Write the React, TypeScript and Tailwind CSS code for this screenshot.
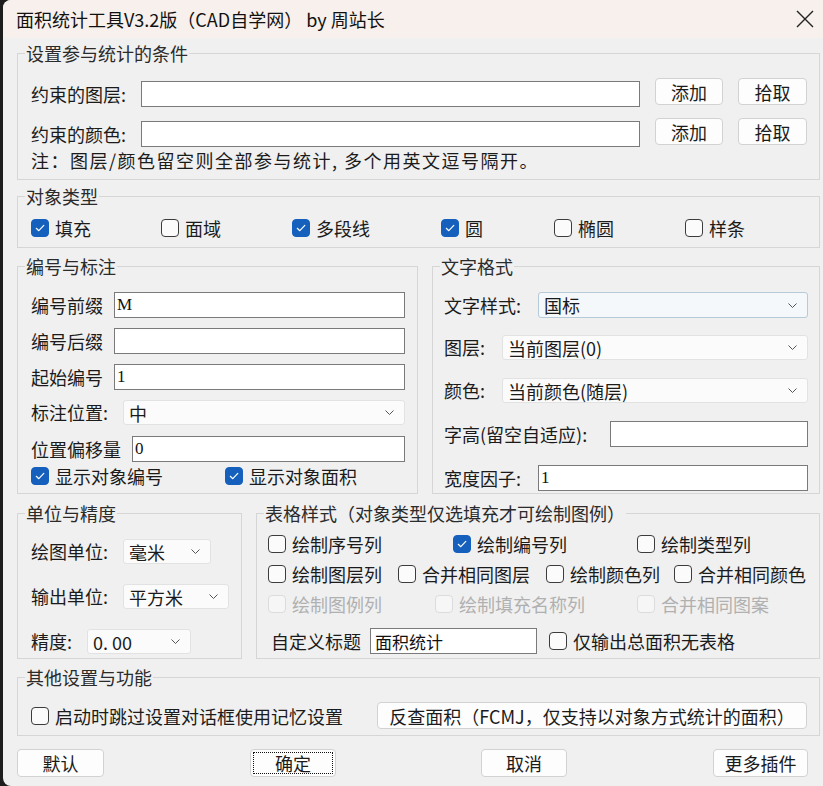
import React from 'react';
import clsx from 'clsx';

const Check = ({ checked, disabled }: { checked?: boolean; disabled?: boolean }) => (
  <span
    className={clsx(
      'flex h-[18px] w-[18px] flex-none items-center justify-center rounded-[4px] border',
      checked
        ? 'border-[#1560bd] bg-[#1560bd]'
        : disabled
          ? 'border-[#dcdcdc] bg-[#f6f6f6]'
          : 'border-[#3c3c3c] bg-[#fbfbfb]'
    )}
  >
    {checked && (
      <svg width="12" height="12" viewBox="0 0 12 12" fill="none">
        <path d="M2.3 6.3 4.8 8.7 9.8 3.4" stroke="white" strokeWidth="1.2" strokeLinecap="round" strokeLinejoin="round" />
      </svg>
    )}
  </span>
);

const CheckItem = ({
  label,
  checked,
  disabled,
  className,
}: {
  label: string;
  checked?: boolean;
  disabled?: boolean;
  className?: string;
}) => (
  <label className={clsx('flex h-[18px] flex-none items-center gap-[6px]', className)}>
    <Check checked={checked} disabled={disabled} />
    <span className={clsx('whitespace-nowrap leading-[18px]', disabled && 'text-[#b0b0b0]')}>{label}</span>
  </label>
);

const Field = ({ value, className }: { value?: string; className?: string }) => (
  <input
    readOnly
    defaultValue={value}
    className={clsx(
      'h-[26px] min-w-0 border border-[#7a7a7a] bg-white px-[2px] font-["Liberation_Serif",serif] text-[17px] text-[#111] outline-none',
      className
    )}
  />
);

const Select = ({ value, className, focus }: { value: string; className?: string; focus?: boolean }) => (
  <div
    className={clsx(
      'flex h-[25px] items-center justify-between rounded-[3px] border pl-[5px] pr-[10px] text-[18px] leading-none',
      focus ? 'border-[#b7cad8] bg-[#f4f8fb]' : 'border-[#e2e2e2] bg-[#fbfbfb]',
      className
    )}
  >
    <span className="whitespace-nowrap">{value}</span>
    <svg width="9" height="5" viewBox="0 0 9 5" fill="none">
      <path d="M0.5 0.5 4.5 4.5 8.5 0.5" stroke="#555" strokeWidth="1" />
    </svg>
  </div>
);

const Btn = ({ label, className }: { label: string; className?: string }) => (
  <button className={clsx('flex items-center justify-center rounded-[4px] border border-[#d2d2d2] bg-[#fdfdfd] text-[18px] leading-none text-[#1b1b1b]', className)}>
    {label}
  </button>
);

// frame with caption on the border; padding goes on the inner box so the caption stays put
const Group = ({
  title,
  className,
  bodyClass,
  children,
}: {
  title: string;
  className?: string;
  bodyClass?: string;
  children: React.ReactNode;
}) => (
  <fieldset className={clsx('flex flex-col border border-[#d6d6d6]', className)}>
    <legend className="ml-[7px] px-[1px] text-[18px] leading-[24px] text-[#2b2b2b]">{title}</legend>
    <div className={clsx('flex-1', bodyClass)}>{children}</div>
  </fieldset>
);

export default function App() {
  return (
    <div className="flex h-[786px] w-[823px] overflow-hidden bg-[#1d1d1d] font-['Noto_Sans_CJK_SC',sans-serif] text-[18px] text-[#1b1b1b]">
      <div className="ml-[3px] flex flex-1 flex-col overflow-hidden rounded-l-[8px] bg-[#f0f0f0]">
        {/* title bar */}
        <div className="flex h-[38px] flex-none items-center justify-between bg-[#f7f0ec] pl-[13px] pr-[9px]">
          <span className="text-[18px] leading-none text-[#111]">面积统计工具V3.2版（CAD自学网） by 周站长</span>
          <svg width="18" height="18" viewBox="0 0 18 18" fill="none">
            <path d="M1 1 17 17M17 1 1 17" stroke="#222" strokeWidth="1.4" />
          </svg>
        </div>

        <div className="flex flex-1 flex-col pl-[14px] pr-[3px]">
          {/* 设置参与统计的条件 */}
          <Group title="设置参与统计的条件" className="mt-[3px]" bodyClass="pb-[8px] pl-[13px] pr-[12px] pt-[13px]">
            <div className="flex h-[29px] items-start">
              <span className="w-[110px] flex-none pt-[3px] leading-[26px]">约束的图层:</span>
              <Field className="mt-[3px] flex-1" />
              <Btn label="添加" className="ml-[15px] h-[27px] w-[68px]" />
              <Btn label="拾取" className="ml-[15px] h-[27px] w-[69px]" />
            </div>
            <div className="mt-[11px] flex h-[29px] items-start">
              <span className="w-[110px] flex-none pt-[3px] leading-[26px]">约束的颜色:</span>
              <Field className="mt-[3px] flex-1" />
              <Btn label="添加" className="ml-[15px] h-[27px] w-[68px]" />
              <Btn label="拾取" className="ml-[15px] h-[27px] w-[69px]" />
            </div>
            <div className="mt-[2px] h-[22px] leading-[22px] tracking-[1.5px]">注：图层/颜色留空则全部参与统计, 多个用英文逗号隔开。</div>
          </Group>

          {/* 对象类型 */}
          <Group title="对象类型" className="mt-[4px]" bodyClass="pb-[9px] pl-[13px] pt-[10px]">
            <div className="flex h-[20px] items-center">
              <CheckItem label="填充" checked className="w-[130px]" />
              <CheckItem label="面域" className="w-[131px]" />
              <CheckItem label="多段线" checked className="w-[149px]" />
              <CheckItem label="圆" checked className="w-[113px]" />
              <CheckItem label="椭圆" className="w-[131px]" />
              <CheckItem label="样条" />
            </div>
          </Group>

          <div className="mt-[6px] flex gap-[14px]">
            {/* 编号与标注 */}
            <Group title="编号与标注" className="w-[401px] flex-none" bodyClass="pb-[8px] pl-[13px] pr-[12px] pt-[14px]">
              <div className="flex flex-col gap-[10px]">
                <div className="flex h-[26px] items-center">
                  <span className="w-[83px] flex-none">编号前缀</span>
                  <Field value="M" className="flex-1" />
                </div>
                <div className="flex h-[26px] items-center">
                  <span className="w-[83px] flex-none">编号后缀</span>
                  <Field className="flex-1" />
                </div>
                <div className="flex h-[26px] items-center">
                  <span className="w-[83px] flex-none">起始编号</span>
                  <Field value="1" className="flex-1" />
                </div>
                <div className="flex h-[26px] items-start">
                  <span className="w-[92px] flex-none leading-[24px]">标注位置:</span>
                  <Select value="中" className="flex-1" />
                </div>
                <div className="flex h-[26px] items-center">
                  <span className="w-[101px] flex-none">位置偏移量</span>
                  <Field value="0" className="flex-1" />
                </div>
              </div>
              <div className="mt-[5px] flex h-[18px] items-center">
                <CheckItem label="显示对象编号" checked className="w-[194px]" />
                <CheckItem label="显示对象面积" checked />
              </div>
            </Group>

            {/* 文字格式 */}
            <Group title="文字格式" className="min-w-0 flex-1" bodyClass="pb-[2px] pl-[11px] pr-[11px] pt-[14px]">
              <div className="flex h-[26px] items-center">
                <span className="w-[94px] flex-none">文字样式:</span>
                <Select value="国标" focus className="h-[26px] flex-1" />
              </div>
              <div className="mt-[17px] flex h-[25px] items-center">
                <span className="w-[58px] flex-none">图层:</span>
                <Select value="当前图层(0)" className="flex-1" />
              </div>
              <div className="mt-[18px] flex h-[25px] items-center">
                <span className="w-[58px] flex-none">颜色:</span>
                <Select value="当前颜色(随层)" className="flex-1" />
              </div>
              <div className="mt-[18px] flex h-[26px] items-center">
                <span className="w-[166px] flex-none">字高(留空自适应):</span>
                <Field className="flex-1" />
              </div>
              <div className="mt-[18px] flex h-[26px] items-center">
                <span className="w-[94px] flex-none">宽度因子:</span>
                <Field value="1" className="flex-1" />
              </div>
            </Group>
          </div>

          <div className="mt-[7px] flex gap-[14px]">
            {/* 单位与精度 */}
            <Group title="单位与精度" className="w-[225px] flex-none" bodyClass="pb-[4px] pl-[13px] pt-[14px]">
              <div className="flex h-[25px] items-center">
                <span className="w-[92px] flex-none">绘图单位:</span>
                <Select value="毫米" className="w-[88px]" />
              </div>
              <div className="mt-[20px] flex h-[25px] items-center">
                <span className="w-[92px] flex-none">输出单位:</span>
                <Select value="平方米" className="w-[106px]" />
              </div>
              <div className="mt-[20px] flex h-[25px] items-center">
                <span className="w-[56px] flex-none">精度:</span>
                <Select value="0. 00" className="w-[104px]" />
              </div>
            </Group>

            {/* 表格样式 */}
            <Group title="表格样式（对象类型仅选填充才可绘制图例）" className="min-w-0 flex-1" bodyClass="pb-[4px] pl-[11px] pt-[10px]">
              <div className="flex h-[18px] items-center">
                <CheckItem label="绘制序号列" className="w-[185px]" />
                <CheckItem label="绘制编号列" checked className="w-[184px]" />
                <CheckItem label="绘制类型列" />
              </div>
              <div className="mt-[12px] flex h-[18px] items-center">
                <CheckItem label="绘制图层列" className="w-[130px]" />
                <CheckItem label="合并相同图层" className="w-[148px]" />
                <CheckItem label="绘制颜色列" className="w-[128px]" />
                <CheckItem label="合并相同颜色" />
              </div>
              <div className="mt-[12px] flex h-[18px] items-center">
                <CheckItem label="绘制图例列" disabled className="w-[167px]" />
                <CheckItem label="绘制填充名称列" disabled className="w-[202px]" />
                <CheckItem label="合并相同图案" disabled />
              </div>
              <div className="mt-[15px] flex h-[26px] items-center">
                <span className="ml-[3px] w-[99px] flex-none">自定义标题</span>
                <Field value="面积统计" className="w-[167px] flex-none px-[4px] font-['Noto_Sans_CJK_SC',sans-serif]" />
                <CheckItem label="仅输出总面积无表格" className="ml-[12px]" />
              </div>
            </Group>
          </div>

          {/* 其他设置与功能 */}
          <Group title="其他设置与功能" className="mt-[6px]" bodyClass="pb-[6px] pl-[13px] pr-[12px] pt-[13px]">
            <div className="flex h-[27px] items-center">
              <CheckItem label="启动时跳过设置对话框使用记忆设置" />
              <Btn label="反查面积（FCMJ，仅支持以对象方式统计的面积）" className="ml-auto h-[27px] w-[430px]" />
            </div>
          </Group>

          {/* bottom buttons */}
          <div className="mt-[13px] flex h-[28px]">
            <Btn label="默认" className="h-[28px] w-[87px]" />
            <Btn
              label="确定"
              className="ml-[146px] h-[28px] w-[86px] border-[#2a6bb0] outline-1 -outline-offset-4 outline-dotted outline-[#111]"
            />
            <Btn label="取消" className="ml-[145px] h-[28px] w-[86px]" />
            <Btn label="更多插件" className="ml-[146px] h-[28px] w-[95px]" />
          </div>
        </div>
      </div>
    </div>
  );
}
